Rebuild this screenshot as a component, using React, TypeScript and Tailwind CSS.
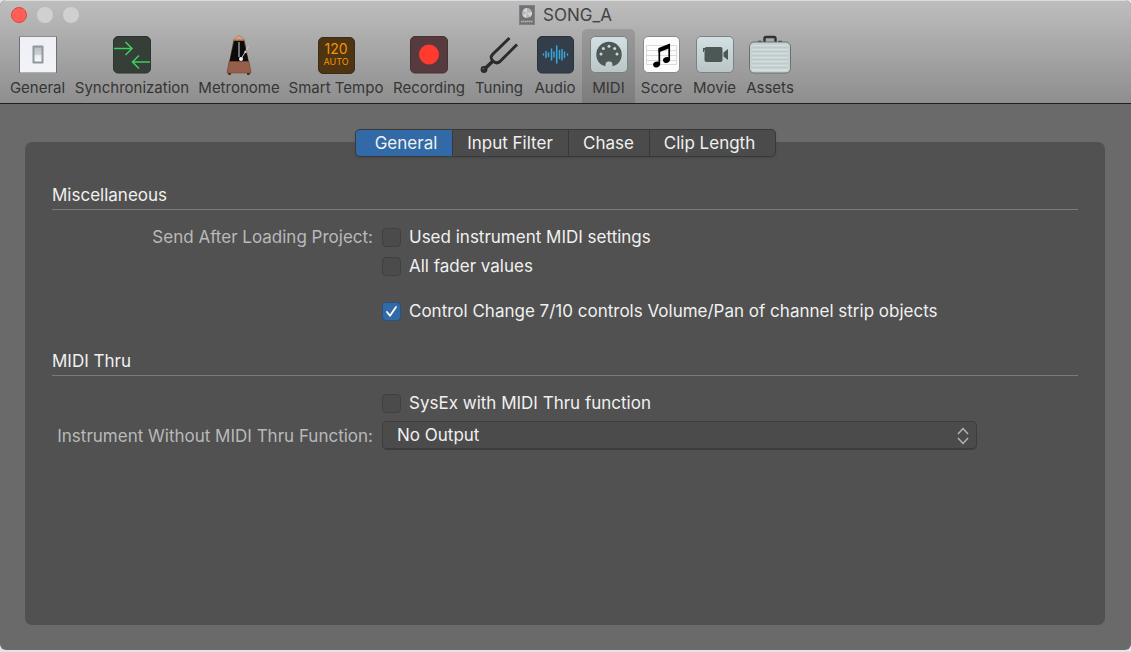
import { type ReactNode } from "react";

const ICON = "h-10 w-12 overflow-visible";

function SwitchIcon() {
  return (
    <svg viewBox="0 0 48 40" className={ICON} aria-hidden="true">
      <defs>
        <linearGradient id="plate" x1="0" y1="0" x2="0" y2="1">
          <stop offset="0" stopColor="#eff0f6" />
          <stop offset="1" stopColor="#f2f3f7" />
        </linearGradient>
        <linearGradient id="rocker" x1="0" y1="0" x2="0" y2="1">
          <stop offset="0" stopColor="#b9c0c8" />
          <stop offset=".5" stopColor="#ccd2d8" />
          <stop offset=".52" stopColor="#e9edf0" />
          <stop offset="1" stopColor="#f6f8fa" />
        </linearGradient>
      </defs>
      <rect x="5" y="1.500" width="38" height="36.500" fill="#707176" />
      <rect x="6" y="2" width="36" height="35.500" fill="url(#plate)" />
      <rect x="18.500" y="10.500" width="11" height="18" rx="1" fill="#8f969c" />
      <rect x="20.500" y="12.500" width="7" height="14" fill="url(#rocker)" />
    </svg>
  );
}

function SyncIcon() {
  return (
    <svg viewBox="0 0 48 40" className={ICON} aria-hidden="true">
      <rect x="5.500" y="1.500" width="37" height="36.500" rx="4.500" fill="#363e38" stroke="#2d332f" />
      <g fill="none" stroke="#3fce5e" strokeWidth="1.500">
        <path d="M6 13.500H24M17.500 7L24 13.500L17.500 20" />
        <path d="M42 27H24.500M31 20.500L24.500 27L31 33.500" />
      </g>
    </svg>
  );
}

function MetronomeIcon() {
  return (
    <svg viewBox="0 0 48 40" className={ICON} aria-hidden="true">
      <path d="M12.500 37H16V40H13.500ZM32 37H35.500L34.500 40H32Z" fill="#4a2c20" />
      <path d="M18.500 4.500L24 0L29.500 4.500L36 38H12Z" fill="#6b4435" />
      <path d="M19.500 4L24 0L28.500 4Z" fill="#d8a17d" />
      <path d="M19.200 6H28.800L33.500 26.500H14.500Z" fill="#0b0b0c" />
      <path d="M18.500 4.800H29.500" stroke="#c48562" strokeWidth="1.400" />
      <path d="M14 26.500H34L36 38H12Z" fill="#94604b" stroke="#74452f" strokeWidth=".6" />
      <path d="M24 7V22" stroke="#8d8d8d" strokeWidth="1.600" />
      <path d="M26 24L33.500 11.500" stroke="#c9c9c9" strokeWidth="1" />
      <path d="M29.500 16.500L31.500 17.500" stroke="#e5e5e5" strokeWidth="1.800" />
      <circle cx="26" cy="24" r="2" fill="#f4f4f4" />
    </svg>
  );
}

function TempoIcon() {
  return (
    <div className="flex h-10 w-12 items-center justify-center">
      <div className="flex size-[37px] flex-col items-center justify-center rounded-[5px] border border-[#3b2c17] bg-[#4d3413] text-[#f59300]">
        <span className="text-[14px] leading-[14px]">120</span>
        <span className="text-[9px] leading-[12px]">AUTO</span>
      </div>
    </div>
  );
}

function RecordIcon() {
  return (
    <svg viewBox="0 0 48 40" className={ICON} aria-hidden="true">
      <rect x="5.500" y="1.500" width="37" height="36.500" rx="4.500" fill="#573a3d" stroke="#463236" />
      <circle cx="24" cy="19.500" r="10" fill="#ff3b30" />
    </svg>
  );
}

function TuningIcon() {
  return (
    <svg viewBox="0 0 48 40" className={ICON} aria-hidden="true">
      <g fill="none" stroke="#2b2b2b" strokeWidth="3">
        <path d="M34.500 3L17.500 19.500C15.500 22 15.500 23.500 18 26C20.500 28.500 22.500 28.500 25 26.500L42 9.500" />
        <path d="M18 26L9 34.500" strokeWidth="3.400" />
      </g>
      <circle cx="9" cy="34.500" r="3.400" fill="#2b2b2b" />
      <circle cx="8.300" cy="33.800" r="1" fill="#5a5a5a" />
    </svg>
  );
}

function AudioIcon() {
  return (
    <svg viewBox="0 0 48 40" className={ICON} aria-hidden="true">
      <rect x="6.500" y="1.500" width="36" height="36.500" rx="4.500" fill="#343d4a" stroke="#2b323d" />
      <path
        d="M12.500 19V20M15 16.500V22.500M17.500 18V21.500M20.500 14V25M23 17V22M25.700 11V28M28.500 15.500V23.500M31 14.500V25M33.500 17V22.500M36.500 19V20"
        stroke="#37a9d8"
        strokeWidth="1.500"
        strokeLinecap="round"
      />
    </svg>
  );
}

function Tile({ children }: { children: ReactNode }) {
  return (
    <svg viewBox="0 0 48 40" className={ICON} aria-hidden="true">
      <defs>
        <linearGradient id="tile" x1="0" y1="0" x2="0" y2="1">
          <stop offset="0" stopColor="#d3e1e2" />
          <stop offset="1" stopColor="#b9c5c6" />
        </linearGradient>
      </defs>
      <rect x="5.500" y="1.500" width="37" height="36" rx="4.500" fill="url(#tile)" stroke="#7b8283" />
      {children}
    </svg>
  );
}

function MidiIcon() {
  return (
    <Tile>
      <path
        d="M20.500 31.200C14.500 30 11.300 25 11.300 19.500A12.700 12.700 0 0 1 36.700 19.500C36.700 25 33.500 30 27.500 31.200C27.800 27.500 26.500 26.500 24 26.500C21.500 26.500 20.300 27.500 20.500 31.200Z"
        fill="#4c5756"
      />
      <g fill="#cbd7d8">
        <circle cx="16" cy="19" r="1.500" />
        <circle cx="18.300" cy="13.500" r="1.500" />
        <circle cx="24" cy="11.300" r="1.500" />
        <circle cx="29.700" cy="13.500" r="1.500" />
        <circle cx="32" cy="19" r="1.500" />
      </g>
    </Tile>
  );
}

function ScoreIcon() {
  return (
    <svg viewBox="0 0 48 40" className={ICON} aria-hidden="true">
      <rect x="5.500" y="1.500" width="36" height="36" rx="4.500" fill="#fcfcfc" stroke="#8a8a8a" />
      <path d="M8.500 10.500H38.500V29.500H8.500ZM8.500 15.500H38.500M8.500 20.500H38.500M8.500 25.500H38.500" fill="none" stroke="#d6d6d6" strokeWidth=".9" />
      <path d="M20.500 13L32 8.500V13L20.500 17.500Z" fill="#000" />
      <path d="M21.300 13.500V29.500M31.200 9V25" stroke="#000" strokeWidth="1.700" />
      <ellipse cx="18.600" cy="29.500" rx="3.500" ry="2.800" transform="rotate(-20 18.600 29.500)" />
      <ellipse cx="28.500" cy="25" rx="3.500" ry="2.800" transform="rotate(-20 28.500 25)" />
    </svg>
  );
}

function MovieIcon() {
  return (
    <Tile>
      <g fill="#4c5756">
        <rect x="13.500" y="12" width="18" height="15" rx="2" />
        <path d="M32.500 17.500L37 14V25L32.500 21.500Z" />
        <path d="M12 13H15V15H13V17H12Z" />
      </g>
    </Tile>
  );
}

function AssetsIcon() {
  return (
    <svg viewBox="0 0 48 40" className={ICON} aria-hidden="true">
      <path d="M18.500 7V3.500Q18.500 2 20 2H28Q29.500 2 29.500 3.500V7" fill="none" stroke="#2e3232" strokeWidth="2.400" />
      <path d="M12 6.500H15.500M32.500 6.500H36" stroke="#3b4040" strokeWidth="1.500" />
      <rect x="3.500" y="7" width="41" height="31" rx="4.500" fill="#c6d2d2" stroke="#687070" />
      <path d="M6.500 11H41.500M6.500 15H41.500M6.500 19H41.500M6.500 23H41.500M6.500 27H41.500M6.500 31H41.500M6.500 35H41.500" stroke="#e2ebeb" strokeWidth="1" />
      <path d="M6.500 12H41.500M6.500 16H41.500M6.500 20H41.500M6.500 24H41.500M6.500 28H41.500M6.500 32H41.500" stroke="#b2bdbd" strokeWidth=".8" />
    </svg>
  );
}

function ProjectIcon() {
  return (
    <svg viewBox="0 0 16 20" className="h-5 w-4" aria-hidden="true">
      <rect x=".5" y=".5" width="15" height="19" fill="#6f7173" stroke="#808284" />
      <circle cx="8" cy="8" r="5" fill="#b4b7b9" />
      <path d="M8 8L4 5.500A5 5 0 0 1 8 3ZM8 8L13 7A5 5 0 0 1 11 12ZM8 8L7 13A5 5 0 0 1 3.500 10Z" fill="#d2d5d7" />
      <path d="M2 16.500H14" stroke="#b9bbbd" strokeWidth="1.500" strokeDasharray="1.500 .5" />
    </svg>
  );
}

const tools = [
  { name: "General", width: "w-[65px]", icon: <SwitchIcon /> },
  { name: "Synchronization", width: "w-[124px]", icon: <SyncIcon /> },
  { name: "Metronome", width: "w-[90px]", icon: <MetronomeIcon /> },
  { name: "Smart Tempo", width: "w-[104px]", icon: <TempoIcon /> },
  { name: "Recording", width: "w-[82px]", icon: <RecordIcon /> },
  { name: "Tuning", width: "w-[58px]", icon: <TuningIcon /> },
  { name: "Audio", width: "w-[54px]", icon: <AudioIcon /> },
  { name: "MIDI", width: "w-[53px]", icon: <MidiIcon />, active: true },
  { name: "Score", width: "w-[53px]", icon: <ScoreIcon /> },
  { name: "Movie", width: "w-[53px]", icon: <MovieIcon /> },
  { name: "Assets", width: "w-[58px]", icon: <AssetsIcon /> },
];

const tabs = [
  { name: "General", style: "w-[98px] pl-[5px] bg-[#316aa6] border-[#24486f]" },
  { name: "Input Filter", style: "w-[116px] bg-[#4b4b4b]" },
  { name: "Chase", style: "w-[81px] bg-[#4b4b4b]" },
  { name: "Clip Length", style: "w-[126px] pr-[5px] bg-[#4b4b4b]" },
];

function Check({ label, checked }: { label: string; checked?: boolean }) {
  return (
    <label className="col-start-2 flex h-6 w-fit items-center gap-2">
      <span className="grid">
        <input
          type="checkbox"
          defaultChecked={checked}
          className="peer col-start-1 row-start-1 size-[19px] appearance-none rounded-[4px] border border-[#404040] bg-[#4b4b4b] checked:border-[#28527e] checked:bg-[#316aa6]"
        />
        <svg
          viewBox="0 0 19 19"
          className="pointer-events-none invisible col-start-1 row-start-1 size-[19px] peer-checked:visible"
          aria-hidden="true"
        >
          <path d="M5 10L8 13.700L14 5" fill="none" stroke="#fff" strokeWidth="1.800" strokeLinecap="round" strokeLinejoin="round" />
        </svg>
      </span>
      {label}
    </label>
  );
}

function Heading({ children }: { children: ReactNode }) {
  return <h2 className="border-b border-[#7a7a7a] pb-0.5">{children}</h2>;
}

export default function App() {
  return (
    <div className="flex min-h-screen flex-col bg-[#e4e4e4] pb-0.5 font-['Inter',sans-serif] text-[17px] leading-6 text-[#f0f0f0]">
      <div className="flex flex-1 flex-col overflow-hidden rounded-md bg-[#6a6a6a]">
        <header className="border-b border-[#1f1f1f] bg-linear-to-b from-[#bebebe] to-[#8e8e8e]">
          <div className="grid h-[29px] grid-cols-[1fr_auto_1fr] items-center border-t border-[#dcdcdc] px-[11px]">
            <div className="flex gap-[10px]">
              <button aria-label="Close" className="size-4 rounded-full border border-[#e0443e] bg-[#ff5f57]" />
              <button aria-label="Minimize" className="size-4 rounded-full bg-[#d0d0d0]" />
              <button aria-label="Zoom" className="size-4 rounded-full bg-[#d0d0d0]" />
            </div>
            <h1 className="flex items-center gap-2 text-[#434343]">
              <ProjectIcon />
              SONG_A
            </h1>
          </div>
          <nav className="flex pl-[5px]">
            {tools.map((t) => (
              <button
                key={t.name}
                className={`flex h-[74px] shrink-0 flex-col items-center rounded-t-[5px] pt-[6px] text-[15px] leading-5 whitespace-nowrap text-[#353535] ${t.width} ${t.active ? "bg-black/12" : ""}`}
              >
                {t.icon}
                <span className="mt-[3px]">{t.name}</span>
              </button>
            ))}
          </nav>
        </header>

        <main className="flex flex-1 flex-col pt-[25px] pr-[26px] pb-[25px] pl-[25px]">
          <div className="z-10 -mb-[15px] flex justify-center">
            <div role="tablist" className="flex rounded-[5px] shadow-sm">
              {tabs.map((t, i) => (
                <button
                  key={t.name}
                  role="tab"
                  aria-selected={i === 0}
                  className={`h-7 border-y border-r border-[#393939] whitespace-nowrap first:rounded-l-[5px] first:border-l last:rounded-r-[5px] ${t.style}`}
                >
                  {t.name}
                </button>
              ))}
            </div>
          </div>
          <div className="flex-1 rounded-[7px] bg-[#515151] px-[27px] pt-[41px]">
            <section>
              <Heading>Miscellaneous</Heading>
              <div className="mt-[15px] grid grid-cols-[321px_1fr] gap-x-[9px] gap-y-[5px]">
                <span className="text-right text-[#b9b9b9]">Send After Loading Project:</span>
                <Check label="Used instrument MIDI settings" />
                <Check label="All fader values" />
              </div>
              <div className="mt-[21px] grid grid-cols-[321px_1fr] gap-x-[9px]">
                <Check label="Control Change 7/10 controls Volume/Pan of channel strip objects" checked />
              </div>
            </section>
            <section className="mt-[26px]">
              <Heading>MIDI Thru</Heading>
              <div className="mt-[15px] grid grid-cols-[321px_1fr] items-center gap-x-[9px] gap-y-[6px]">
                <Check label="SysEx with MIDI Thru function" />
                <label htmlFor="instrument" className="text-right whitespace-nowrap text-[#b9b9b9]">
                  Instrument Without MIDI Thru Function:
                </label>
                <div className="grid w-full max-w-[595px] items-center">
                  <select
                    id="instrument"
                    className="col-start-1 row-start-1 h-[29px] appearance-none rounded-[5px] border border-b-2 border-[#3d3d3d] bg-[#4b4b4b] px-[14px]"
                  >
                    <option>No Output</option>
                  </select>
                  <svg viewBox="0 0 12 18" className="pointer-events-none col-start-1 row-start-1 mr-2 h-[18px] w-3 justify-self-end" aria-hidden="true">
                    <path d="M1 7L6 1.500L11 7M1 11L6 16.500L11 11" fill="none" stroke="#b4b4b4" strokeWidth="1.500" />
                  </svg>
                </div>
              </div>
            </section>
          </div>
        </main>
      </div>
    </div>
  );
}
